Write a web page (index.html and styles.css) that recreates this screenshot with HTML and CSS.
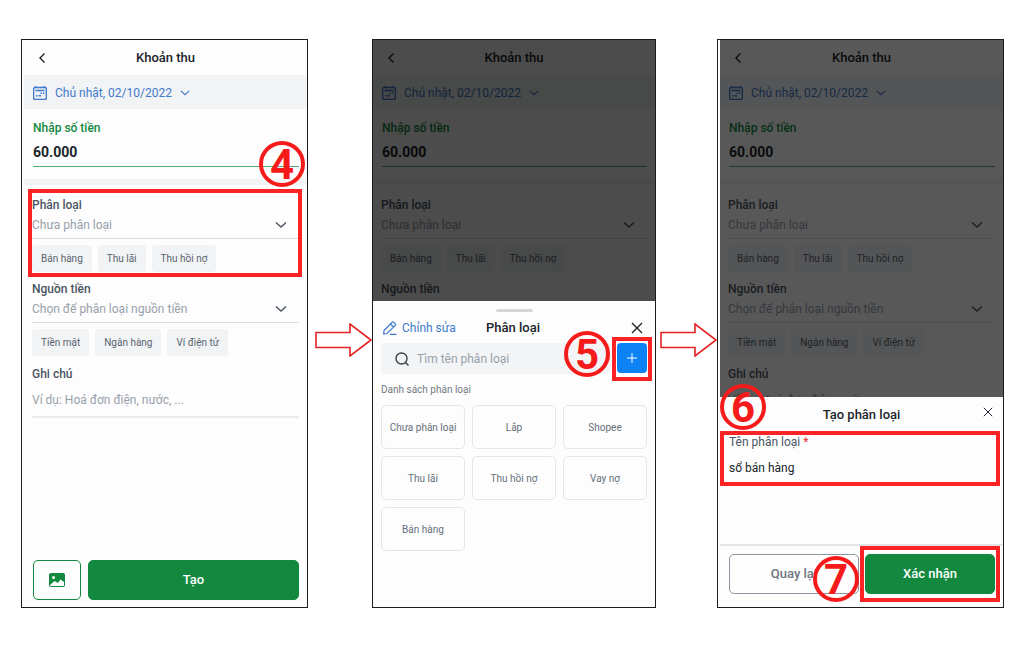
FILE: index.html
```html
<!DOCTYPE html>
<html lang="vi">
<head>
  <meta charset="UTF-8" />
  <meta name="viewport" content="width=device-width, initial-scale=1.0" />
  <title>Khoản thu</title>
  <link rel="stylesheet" href="styles.css">
</head>
<body>
  <svg class="sprite" aria-hidden="true">
    <symbol id="i-back" viewBox="0 0 12 12"><path d="M8.500 1.500 4 6l4.500 4.500" /></symbol>
    <symbol id="i-down" viewBox="0 0 12 12"><path d="M1 3.500 6 8l5-4.500" /></symbol>
    <symbol id="i-close" viewBox="0 0 12 12"><path d="m1 1 10 10M11 1 1 11" /></symbol>
    <symbol id="i-calendar" viewBox="0 0 14 14"><rect x=".6" y="1.500" width="12.800" height="11.900" rx="1.500" /><path d="M2.500 0v2M11.500 0v2M2.500 4.500h9M7.500 7.200h1.500M10 7.200h1.500M3 9.800h1.500M5.500 9.800h2.500" /></symbol>
    <symbol id="i-pencil" viewBox="0 0 14 14"><path d="M1 9.500 9.200 1.300q.8-.7 1.600 0l1.500 1.500q.7.800 0 1.600L4 12.500l-3.300.5zM7.500 3l3 3M7 13.300h6.500" /></symbol>
    <symbol id="i-search" viewBox="0 0 14 14"><circle cx="6.500" cy="6.500" r="5.500" /><path d="m10.500 10.500 3 3" /></symbol>
    <symbol id="i-arrow" viewBox="0 0 57 34"><path d="M1 9.500h34V1l21 16-21 16v-8.500H1z" /></symbol>
  </svg>

  <main class="steps">
    <!-- Step 4 -->
    <section class="phone inset">
      <header class="topbar">
        <button class="icon-btn" type="button" aria-label="Quay lại"><svg class="icon"><use href="#i-back" /></svg></button>
        <h2>Khoản thu</h2>
      </header>
      <button class="date" type="button">
        <svg class="icon calendar"><use href="#i-calendar" /></svg>
        <span>Chủ nhật, 02/10/2022</span>
        <svg class="icon small"><use href="#i-down" /></svg>
      </button>
      <div class="amount">
        <label for="amount1">Nhập số tiền</label>
        <input id="amount1" type="text" value="60.000">
        <span class="badge badge-4">4</span>
      </div>
      <div class="field first">
        <label for="category1">Phân loại</label>
        <div class="select">
          <select id="category1"><option>Chưa phân loại</option></select>
          <svg class="icon"><use href="#i-down" /></svg>
        </div>
        <div class="chips">
          <button type="button">Bán hàng</button>
          <button type="button">Thu lãi</button>
          <button type="button">Thu hồi nợ</button>
        </div>
        <div class="mark mark-category"></div>
      </div>
      <div class="field">
        <label for="source1">Nguồn tiền</label>
        <div class="select">
          <select id="source1"><option>Chọn để phân loại nguồn tiền</option></select>
          <svg class="icon"><use href="#i-down" /></svg>
        </div>
        <div class="chips">
          <button type="button">Tiền mặt</button>
          <button type="button">Ngân hàng</button>
          <button type="button">Ví điện tử</button>
        </div>
      </div>
      <div class="field note">
        <label for="note1">Ghi chú</label>
        <input id="note1" type="text" placeholder="Ví dụ: Hoá đơn điện, nước, ...">
      </div>
      <footer class="actions">
        <button class="btn photo" type="button" aria-label="Thêm ảnh">
          <svg viewBox="0 0 16 14"><path fill-rule="evenodd" d="M2 0h12q2 0 2 2v10q0 2-2 2H2q-2 0-2-2V2q0-2 2-2zM4.500 3a1.500 1.500 0 1 0 0 3 1.500 1.500 0 0 0 0-3zM1 12q0 1 1 1h12q1 0 1-1V9L11.500 6.500 9 10 5.500 8z" /></svg>
        </button>
        <button class="btn primary" type="button">Tạo</button>
      </footer>
    </section>

    <svg class="arrow" aria-hidden="true"><use href="#i-arrow" /></svg>

    <!-- Step 5 -->
    <section class="phone">
      <header class="topbar">
        <button class="icon-btn" type="button" aria-label="Quay lại"><svg class="icon"><use href="#i-back" /></svg></button>
        <h2>Khoản thu</h2>
      </header>
      <button class="date" type="button">
        <svg class="icon calendar"><use href="#i-calendar" /></svg>
        <span>Chủ nhật, 02/10/2022</span>
        <svg class="icon small"><use href="#i-down" /></svg>
      </button>
      <div class="amount">
        <label for="amount2">Nhập số tiền</label>
        <input id="amount2" type="text" value="60.000">
      </div>
      <div class="field first">
        <label for="category2">Phân loại</label>
        <div class="select">
          <select id="category2"><option>Chưa phân loại</option></select>
          <svg class="icon"><use href="#i-down" /></svg>
        </div>
        <div class="chips">
          <button type="button">Bán hàng</button>
          <button type="button">Thu lãi</button>
          <button type="button">Thu hồi nợ</button>
        </div>
      </div>
      <div class="field">
        <h3>Nguồn tiền</h3>
      </div>

      <div class="overlay dark"></div>
      <div class="sheet sheet-list">
        <div class="handle"></div>
        <div class="sheet-head">
          <button class="edit" type="button"><svg class="icon"><use href="#i-pencil" /></svg>Chỉnh sửa</button>
          <h2>Phân loại</h2>
          <button class="icon-btn" type="button" aria-label="Đóng"><svg class="icon"><use href="#i-close" /></svg></button>
        </div>
        <div class="search-row">
          <div class="search">
            <svg class="icon"><use href="#i-search" /></svg>
            <input type="text" aria-label="Tìm tên phân loại" placeholder="Tìm tên phân loại">
          </div>
          <div class="add-wrap">
            <button class="add" type="button" aria-label="Thêm"><svg viewBox="0 0 10 10"><path d="M5 0v10M0 5h10" /></svg></button>
            <div class="mark mark-add"></div>
            <span class="badge badge-5">5</span>
          </div>
        </div>
        <p class="list-title">Danh sách phân loại</p>
        <div class="categories">
          <button type="button">Chưa phân loại</button>
          <button type="button">Lắp</button>
          <button type="button">Shopee</button>
          <button type="button">Thu lãi</button>
          <button type="button">Thu hồi nợ</button>
          <button type="button">Vay nợ</button>
          <button type="button">Bán hàng</button>
        </div>
      </div>
    </section>

    <svg class="arrow" aria-hidden="true"><use href="#i-arrow" /></svg>

    <!-- Steps 6 and 7 -->
    <section class="phone inset">
      <header class="topbar">
        <button class="icon-btn" type="button" aria-label="Quay lại"><svg class="icon"><use href="#i-back" /></svg></button>
        <h2>Khoản thu</h2>
      </header>
      <button class="date" type="button">
        <svg class="icon calendar"><use href="#i-calendar" /></svg>
        <span>Chủ nhật, 02/10/2022</span>
        <svg class="icon small"><use href="#i-down" /></svg>
      </button>
      <div class="amount">
        <label for="amount3">Nhập số tiền</label>
        <input id="amount3" type="text" value="60.000">
      </div>
      <div class="field first">
        <label for="category3">Phân loại</label>
        <div class="select">
          <select id="category3"><option>Chưa phân loại</option></select>
          <svg class="icon"><use href="#i-down" /></svg>
        </div>
        <div class="chips">
          <button type="button">Bán hàng</button>
          <button type="button">Thu lãi</button>
          <button type="button">Thu hồi nợ</button>
        </div>
      </div>
      <div class="field">
        <label for="source3">Nguồn tiền</label>
        <div class="select">
          <select id="source3"><option>Chọn để phân loại nguồn tiền</option></select>
          <svg class="icon"><use href="#i-down" /></svg>
        </div>
        <div class="chips">
          <button type="button">Tiền mặt</button>
          <button type="button">Ngân hàng</button>
          <button type="button">Ví điện tử</button>
        </div>
      </div>
      <div class="field note">
        <label for="note3">Ghi chú</label>
        <input id="note3" type="text" placeholder="Ví dụ: Hoá đơn điện, nước, ...">
      </div>

      <div class="overlay"></div>
      <div class="sheet sheet-create">
        <div class="sheet-head">
          <h2>Tạo phân loại</h2>
          <button class="icon-btn" type="button" aria-label="Đóng"><svg class="icon small"><use href="#i-close" /></svg></button>
        </div>
        <div class="name-field">
          <label for="name">Tên phân loại <span class="required">*</span></label>
          <input id="name" type="text" value="sổ bán hàng">
          <div class="mark mark-name"></div>
          <span class="badge badge-6">6</span>
        </div>
        <footer class="sheet-actions">
          <button class="btn outline" type="button">Quay lại</button>
          <button class="btn primary" type="button">Xác nhận</button>
          <div class="mark mark-confirm"></div>
          <span class="badge badge-7">7</span>
        </footer>
      </div>
    </section>
  </main>
</body>
</html>
```

FILE: styles.css
```css
:root {
  --green: #12893f;
  --blue: #3f7acb;
  --red: #fb2323;
  --text: #20242a;
  --label: #4b5563;
  --muted: #98a1ab;
  --fill: #f1f3f5;
  --line: #d9dde1;
}

* {
  box-sizing: border-box;
}

body {
  margin: 0;
  background: #fff;
  color: var(--text);
  font-family: Roboto, "Liberation Sans", sans-serif;
  font-size: 12px;
  line-height: 16px;
}

h2, h3, p {
  margin: 0;
}

h2 {
  font-size: 13px;
  font-weight: 500;
  text-align: center;
}

button, input, select {
  margin: 0;
  padding: 0;
  border: 0;
  background: none;
  color: inherit;
  font: inherit;
}

input, select {
  display: block;
  width: 100%;
  min-width: 0;
  outline: none;
}

button {
  cursor: pointer;
}

.sprite {
  display: none;
}

.icon {
  display: block;
  width: 12px;
  height: 12px;
  flex: none;
  fill: none;
  stroke: currentColor;
  stroke-width: 1.4;
}

.icon.small {
  width: 10px;
  height: 10px;
}

.steps {
  display: grid;
  grid-template-columns: 287fr 64px 284fr 61px 287fr;
  min-height: 100vh;
  padding: 39px 20px 39px 21px;
}

.arrow {
  width: 57px;
  height: 34px;
  align-self: center;
  justify-self: end;
  margin-top: 32px;
  fill: #fff;
  stroke: #e32222;
  stroke-width: 1.6;
}

/* Phone screen */
.phone {
  position: relative;
  display: flex;
  flex-direction: column;
  min-width: 0;
  border: 1px solid #1c1c1c;
  background: #fdfdfd;
}

.phone.inset {
  padding-left: 2px;
}

.topbar {
  display: grid;
  grid-template-columns: 20px 1fr 20px;
  align-items: center;
  height: 35px;
  padding: 0 12px;
}

.icon-btn {
  display: flex;
  align-items: center;
}

.date {
  display: flex;
  align-items: center;
  gap: 8px;
  height: 34px;
  padding: 2px 9px 0;
  background: var(--fill);
  color: var(--blue);
}

.calendar {
  width: 14px;
  height: 14px;
  stroke-width: 1.4;
}

.amount {
  position: relative;
  padding: 11px 8px 12px 9px;
  border-bottom: 6px solid var(--fill);
}

.amount label {
  display: block;
  color: var(--green);
  font-weight: 500;
}

.amount input {
  height: 31px;
  padding-top: 1px;
  border-bottom: 1px solid #4fae76;
  font-size: 14px;
  font-weight: 700;
}

.field {
  position: relative;
  padding: 9px 8px 0;
}

.field.first {
  padding-top: 12px;
}

.field label, .field h3 {
  display: block;
  color: var(--label);
  font-size: 12px;
  font-weight: 500;
}

.select {
  position: relative;
}

.select select {
  height: 26px;
  padding-bottom: 1px;
  border-bottom: 1px solid var(--line);
  color: var(--muted);
  appearance: none;
}

.select .icon {
  position: absolute;
  top: 6px;
  right: 12px;
  color: var(--label);
  pointer-events: none;
}

.chips {
  display: flex;
  gap: 6px;
  margin-top: 6px;
}

.chips button {
  height: 27px;
  padding: 0 9px;
  border-radius: 4px;
  background: var(--fill);
  color: #59636f;
  font-size: 10px;
}

.field.note {
  padding-top: 10px;
}

.note input {
  height: 36px;
  padding-top: 2px;
  border-bottom: 2px solid #e9ebed;
}

input::placeholder {
  color: var(--muted);
  opacity: 1;
}

.actions {
  display: grid;
  grid-template-columns: 48px 1fr;
  gap: 7px;
  margin-top: auto;
  padding: 0 8px 7px 9px;
}

.btn {
  height: 40px;
  border: 1px solid var(--green);
  border-radius: 5px;
  font-size: 13px;
  font-weight: 500;
}

.primary {
  background: var(--green);
  color: #fff;
}

.outline {
  border-color: #8d96a0;
  color: #6b7580;
}

.photo {
  display: flex;
  align-items: center;
  justify-content: center;
}

.photo svg {
  width: 16px;
  height: 14px;
  fill: var(--green);
}

/* Bottom sheets */
.overlay {
  position: absolute;
  inset: 0 0 0 2px;
  background: rgba(0, 0, 0, 0.65);
}

.overlay.dark {
  left: 0;
  background: rgba(0, 0, 0, 0.7);
}

.sheet {
  position: absolute;
  right: 0;
  bottom: 0;
  left: 0;
  display: flex;
  flex-direction: column;
  background: #fdfdfd;
}

.sheet-list {
  top: 261px;
  padding: 8px 8px 0;
}

.handle {
  width: 37px;
  height: 3px;
  margin: 0 auto;
  border-radius: 2px;
  background: #d6d6d6;
}

.sheet-head {
  display: grid;
  grid-template-columns: 1fr auto 1fr;
  align-items: center;
}

.sheet-head h2 {
  grid-column: 2;
}

.sheet-head .icon-btn {
  justify-self: end;
}

.sheet-list .sheet-head {
  height: 31px;
  padding: 0 4px 0 2px;
}

.edit {
  display: flex;
  align-items: center;
  gap: 5px;
  color: var(--blue);
}

.edit .icon {
  width: 14px;
  height: 14px;
  stroke-width: 1.2;
}

.search-row {
  display: flex;
  gap: 6px;
}

.search {
  display: flex;
  flex: 1;
  align-items: center;
  gap: 8px;
  min-width: 0;
  height: 31px;
  padding-left: 14px;
  border-radius: 4px;
  background: #f3f4f6;
}

.search .icon {
  width: 14px;
  height: 14px;
  color: #3d434a;
}

.add-wrap {
  position: relative;
}

.add {
  display: flex;
  align-items: center;
  justify-content: center;
  width: 30px;
  height: 30px;
  border-radius: 4px;
  background: #0d82f5;
}

.add svg {
  width: 10px;
  height: 10px;
  stroke: #fff;
  stroke-width: 1;
}

.list-title {
  margin: 8px 0 7px;
  color: #737a82;
  font-size: 10px;
}

.categories {
  display: grid;
  grid-template-columns: repeat(3, 1fr);
  gap: 7px;
}

.categories button {
  height: 44px;
  padding-top: 2px;
  border: 1px solid #e3e6e9;
  border-radius: 5px;
  color: #65707b;
  font-size: 10px;
}

.sheet-create {
  top: 357px;
}

.sheet-create .sheet-head {
  height: 36px;
  padding: 0 10px 0 12px;
}

.sheet-create .icon-btn {
  align-self: start;
  padding-top: 10px;
}

.sheet-create .icon {
  stroke-width: 1.2;
}

.name-field {
  position: relative;
  padding: 0 11px;
}

.name-field label {
  display: block;
  line-height: 18px;
  color: var(--label);
}

.name-field input {
  height: 34px;
}

.required {
  color: #e5322d;
}

.sheet-actions {
  position: relative;
  display: grid;
  grid-template-columns: 1fr 1fr;
  gap: 6px;
  margin: auto 0 0 2px;
  padding: 8px 8px 13px 9px;
  border-top: 2px solid #e3e6e9;
}

/* Step marks drawn over the screens */
.mark {
  position: absolute;
  border: 4px solid var(--red);
  pointer-events: none;
}

.mark-category {
  inset: 4px 5px -5px 4px;
}

.mark-add {
  inset: -6px -5px -7px;
}

.mark-name {
  inset: -2px 3px -1px 2px;
}

.mark-confirm {
  inset: 0 3px 5px 140px;
}

.badge {
  position: absolute;
  z-index: 1;
  width: 46px;
  height: 46px;
  border: 4px solid #f61b1b;
  border-radius: 50%;
  color: #f61b1b;
  font-size: 42px;
  font-weight: 700;
  line-height: 40px;
  text-align: center;
  pointer-events: none;
}

.badge-4 {
  right: 2px;
  bottom: -8px;
}

.badge-5 {
  top: -12px;
  right: 37px;
}

.badge-6 {
  top: -49px;
  left: 2px;
}

.badge-7 {
  right: 144px;
  bottom: 5px;
}
```
